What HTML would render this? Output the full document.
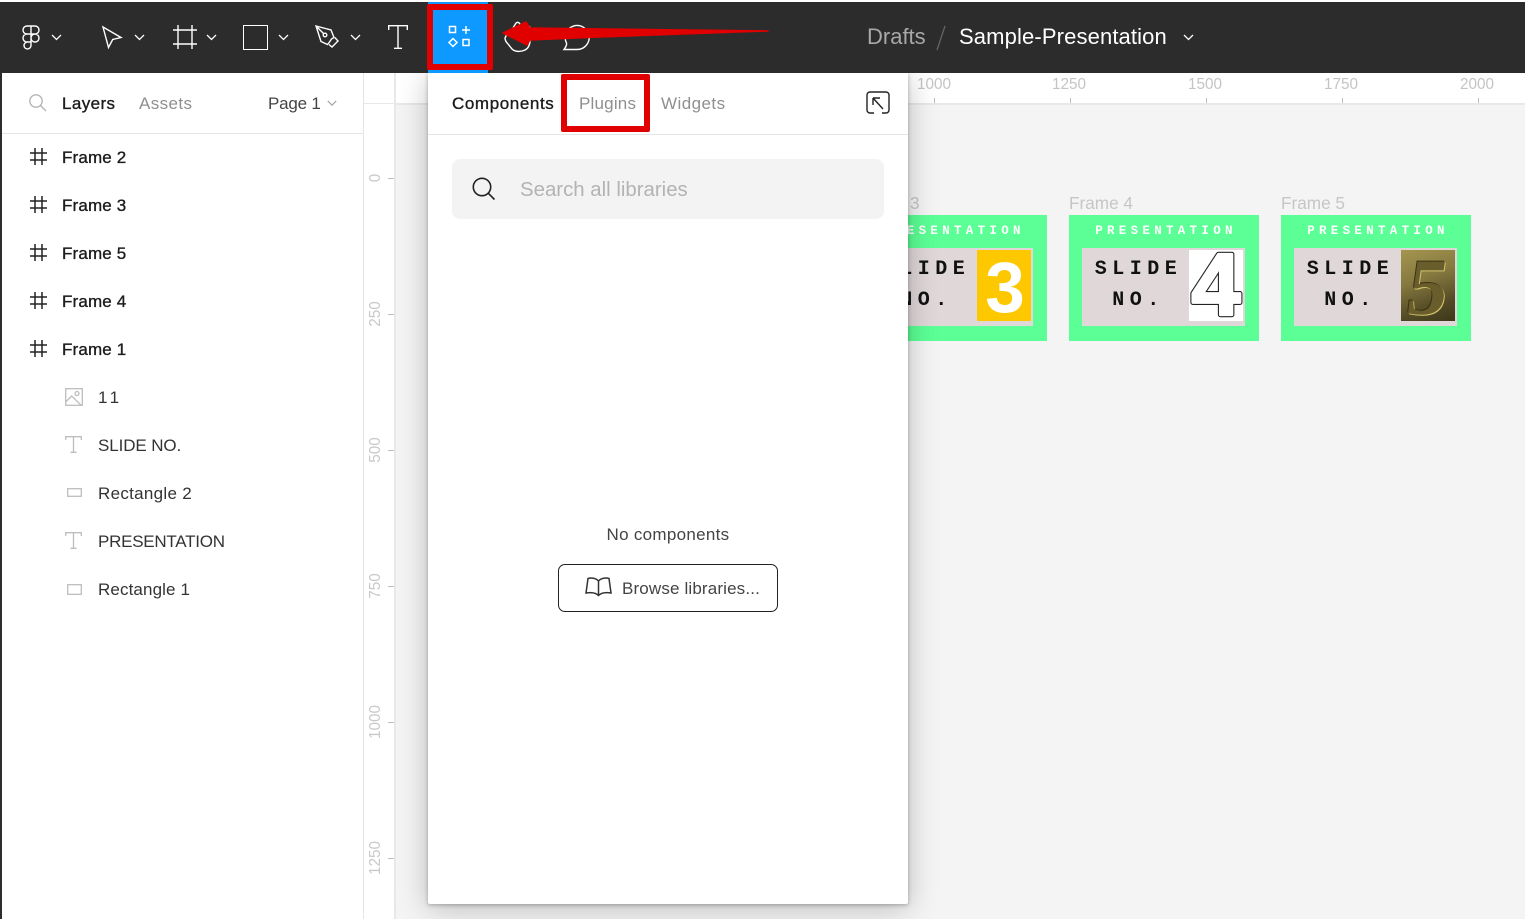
<!DOCTYPE html>
<html><head><meta charset="utf-8"><title>Sample-Presentation</title>
<style>
html,body{margin:0;padding:0;background:#fff}
body{width:1525px;height:919px;overflow:hidden;position:relative;font-family:"Liberation Sans",sans-serif;color:#222}
.a{position:absolute;white-space:nowrap}
svg{position:absolute;overflow:visible}
.t{font-size:17px;line-height:20px;margin-top:1px}
.b{font-weight:400;color:#1c1c1c;-webkit-text-stroke:.35px #1c1c1c}
.f{letter-spacing:.15px}
.rh{position:absolute;top:76px;font-size:15.300px;line-height:18px;color:#c4c4c4;width:60px;text-align:center}
.tk{position:absolute;background:#bdbdbd}
.rv{position:absolute;left:346px;width:60px;text-align:center;font-size:15.300px;line-height:18px;color:#c9c9c9;transform:rotate(-90deg)}
.fl{position:absolute;font-size:17.200px;line-height:18px;color:#c6c6c6;top:194px}
.fr{position:absolute;top:215px;width:190px;height:126px;background:#5cff95}
.fr .p{position:absolute;left:0;width:190px;top:8px;text-align:center;color:#fff;font:bold 12.500px/16px "Liberation Mono",monospace;letter-spacing:4.300px;text-indent:4px}
.fr .in{position:absolute;left:13px;top:33px;width:163px;height:78px;background:#dfd7d8}
.fr .s{position:absolute;left:0;width:108px;text-align:center;font:bold 20px/24px "Liberation Mono",monospace;letter-spacing:5.500px;color:#111;text-indent:5px}
.fr .im{position:absolute;left:107px;top:2px;width:54px;height:71px;overflow:hidden}
</style></head><body>

<!-- canvas -->
<div class="a" style="left:395px;top:104px;width:1130px;height:815px;background:#f4f4f4"></div>

<!-- frame labels -->
<div class="fl" style="left:910px">3</div>
<div class="fl" style="left:1069px">Frame 4</div>
<div class="fl" style="left:1281px">Frame 5</div>

<!-- frames -->
<div class="fr" style="left:857px">
 <div class="p">PRESENTATION</div>
 <div class="in">
  <div class="s" style="top:10px">SLIDE</div><div class="s" style="top:41px">NO.</div>
  <div class="im" style="background:#fdc800;border-radius:1px"><div style="position:absolute;left:1px;width:54px;text-align:center;top:-1px;font:bold 71px/80px 'Liberation Sans',sans-serif;color:#fff">3</div></div>
 </div>
</div>
<div class="fr" style="left:1069px">
 <div class="p">PRESENTATION</div>
 <div class="in">
  <div class="s" style="top:10px">SLIDE</div><div class="s" style="top:41px">NO.</div>
  <div class="im" style="background:#fff">
   <svg width="54" height="71" viewBox="0 0 54 71" style="left:0;top:0">
    <text x="27" y="65" text-anchor="middle" font-family="Liberation Sans" font-size="88" font-weight="700" fill="#fff" stroke="#222" stroke-width="5" stroke-linejoin="round">4</text>
    <text x="27" y="65" text-anchor="middle" font-family="Liberation Sans" font-size="88" font-weight="700" fill="#fff" stroke="#fff" stroke-width="2.800" stroke-linejoin="round">4</text>
   </svg>
  </div>
 </div>
</div>
<div class="fr" style="left:1281px">
 <div class="p">PRESENTATION</div>
 <div class="in">
  <div class="s" style="top:10px">SLIDE</div><div class="s" style="top:41px">NO.</div>
  <div class="im" style="background:linear-gradient(160deg,#a5954f 0%,#85793f 40%,#544b26 75%,#3d3719 100%)">
   <div style="position:absolute;left:0;width:54px;text-align:center;top:-2px;font:bold 80px/80px 'Liberation Serif',serif;transform:skewX(-8deg);color:#6a5d2c;text-shadow:1px 1px 0 #d3c26c,-1px -1px 0 #3a3216">5</div>
  </div>
 </div>
</div>

<!-- rulers -->
<div class="a" style="left:364px;top:73px;width:1161px;height:30px;background:#fff"></div>
<div class="a" style="left:364px;top:103px;width:1161px;height:2px;background:#e8e8e8"></div>
<div class="a" style="left:364px;top:104px;width:31px;height:815px;background:#fff"></div>
<div class="a" style="left:394px;top:73px;width:2px;height:846px;background:#e8e8e8"></div>

<div class="rh" style="left:904px">1000</div><div class="tk" style="left:934px;top:98px;width:1px;height:5px"></div>
<div class="rh" style="left:1039px">1250</div><div class="tk" style="left:1070px;top:98px;width:1px;height:5px"></div>
<div class="rh" style="left:1175px">1500</div><div class="tk" style="left:1206px;top:98px;width:1px;height:5px"></div>
<div class="rh" style="left:1311px">1750</div><div class="tk" style="left:1342px;top:98px;width:1px;height:5px"></div>
<div class="rh" style="left:1447px">2000</div><div class="tk" style="left:1478px;top:98px;width:1px;height:5px"></div>

<div class="rv" style="top:169px">0</div><div class="tk" style="left:388px;top:178px;width:6px;height:1px"></div>
<div class="rv" style="top:305px">250</div><div class="tk" style="left:388px;top:314px;width:6px;height:1px"></div>
<div class="rv" style="top:441px">500</div><div class="tk" style="left:388px;top:450px;width:6px;height:1px"></div>
<div class="rv" style="top:577px">750</div><div class="tk" style="left:388px;top:586px;width:6px;height:1px"></div>
<div class="rv" style="top:713px">1000</div><div class="tk" style="left:388px;top:722px;width:6px;height:1px"></div>
<div class="rv" style="top:849px">1250</div><div class="tk" style="left:388px;top:858px;width:6px;height:1px"></div>

<!-- left panel -->
<div class="a" style="left:0;top:73px;width:2px;height:846px;background:#2c2c2c"></div>
<div class="a" style="left:2px;top:73px;width:361px;height:846px;background:#fff"></div>
<div class="a" style="left:363px;top:73px;width:1px;height:846px;background:#e5e5e5"></div>
<div class="a" style="left:2px;top:133px;width:361px;height:1px;background:#e5e5e5"></div>

<svg style="left:28px;top:93px" width="20" height="20" viewBox="0 0 20 20" fill="none" stroke="#b5b5b5" stroke-width="1.400"><circle cx="8" cy="8" r="6.200"/><path d="M12.500 12.500L18 18"/></svg>
<div class="a t b" style="left:62px;top:93px;letter-spacing:.4px">Layers</div>
<div class="a t" style="left:139px;top:93px;color:#8f8f8f;letter-spacing:.4px">Assets</div>
<div class="a t" style="left:268px;top:93px;color:#444;letter-spacing:-.2px">Page 1</div>
<svg style="left:327px;top:100px" width="10" height="7" viewBox="0 0 10 7" fill="none" stroke="#a0a0a0" stroke-width="1.200"><path d="M.8 1L5 5.200 9.200 1"/></svg>

<!-- layer rows -->
<svg style="left:30px;top:148px" width="17" height="17" viewBox="0 0 17 17" stroke="#222" stroke-width="1.500" fill="none"><path d="M5 0v17M12 0v17M0 5h17M0 12h17"/></svg>
<div class="a t b f" style="left:62px;top:147px">Frame 2</div>
<svg style="left:30px;top:196px" width="17" height="17" viewBox="0 0 17 17" stroke="#222" stroke-width="1.500" fill="none"><path d="M5 0v17M12 0v17M0 5h17M0 12h17"/></svg>
<div class="a t b f" style="left:62px;top:195px">Frame 3</div>
<svg style="left:30px;top:244px" width="17" height="17" viewBox="0 0 17 17" stroke="#222" stroke-width="1.500" fill="none"><path d="M5 0v17M12 0v17M0 5h17M0 12h17"/></svg>
<div class="a t b f" style="left:62px;top:243px">Frame 5</div>
<svg style="left:30px;top:292px" width="17" height="17" viewBox="0 0 17 17" stroke="#222" stroke-width="1.500" fill="none"><path d="M5 0v17M12 0v17M0 5h17M0 12h17"/></svg>
<div class="a t b f" style="left:62px;top:291px">Frame 4</div>
<svg style="left:30px;top:340px" width="17" height="17" viewBox="0 0 17 17" stroke="#222" stroke-width="1.500" fill="none"><path d="M5 0v17M12 0v17M0 5h17M0 12h17"/></svg>
<div class="a t b f" style="left:62px;top:339px">Frame 1</div>

<svg style="left:65px;top:388px" width="18" height="18" viewBox="0 0 18 18" fill="none" stroke="#bdbdbd" stroke-width="1.300"><rect x=".7" y=".7" width="16.600" height="16.600"/><path d="M.7 14l6-6 9.500 9.300"/><circle cx="12" cy="5.500" r="2"/></svg>
<div class="a t" style="left:98px;top:387px;color:#333;letter-spacing:-1.300px">1 1</div>
<svg style="left:65px;top:436px" width="17" height="17" viewBox="0 0 17 17" fill="none" stroke="#bdbdbd" stroke-width="1.300"><path d="M.7 4V.7h15.600V4M8.500.7v15.600M5.500 16.300h6"/></svg>
<div class="a t" style="left:98px;top:435px;color:#333;letter-spacing:-.1px">SLIDE NO.</div>
<svg style="left:67px;top:488px" width="15" height="9" viewBox="0 0 15 9" fill="none" stroke="#bdbdbd" stroke-width="1.300"><rect x=".7" y=".7" width="13.600" height="7.600"/></svg>
<div class="a t" style="left:98px;top:483px;color:#333;letter-spacing:.3px">Rectangle 2</div>
<svg style="left:65px;top:532px" width="17" height="17" viewBox="0 0 17 17" fill="none" stroke="#bdbdbd" stroke-width="1.300"><path d="M.7 4V.7h15.600V4M8.500.7v15.600M5.500 16.300h6"/></svg>
<div class="a t" style="left:98px;top:531px;color:#333;letter-spacing:-.25px">PRESENTATION</div>
<svg style="left:67px;top:584px" width="15" height="11" viewBox="0 0 15 11" fill="none" stroke="#bdbdbd" stroke-width="1.300"><rect x=".7" y=".7" width="13.600" height="9.600"/></svg>
<div class="a t" style="left:98px;top:579px;color:#333;letter-spacing:.12px">Rectangle 1</div>

<!-- assets panel -->
<div class="a" style="left:428px;top:73px;width:480px;height:831px;background:#fff;border-radius:0 0 2px 2px;box-shadow:0 1px 4px rgba(0,0,0,.28),0 4px 30px rgba(0,0,0,.24)"></div>
<div class="a" style="left:428px;top:134px;width:480px;height:1px;background:#e5e5e5"></div>
<div class="a t b" style="left:452px;top:93px;letter-spacing:.6px">Components</div>
<div class="a t" style="left:579px;top:93px;color:#8f8f8f;letter-spacing:.2px">Plugins</div>
<div class="a t" style="left:661px;top:93px;color:#8f8f8f;letter-spacing:.45px">Widgets</div>
<svg style="left:866px;top:91px" width="24" height="25" viewBox="0 0 24 25" fill="none" stroke="#222" stroke-width="1.400"><path d="M4 1h16a3 3 0 0 1 3 3v15a3 3 0 0 1-3 3h-4M8 22H4a3 3 0 0 1-3-3V4a3 3 0 0 1 3-3"/><path d="M7 7v7M7 7h7M7 7l10 11"/></svg>

<div class="a" style="left:452px;top:159px;width:432px;height:60px;background:#f3f3f3;border-radius:8px"></div>
<svg style="left:472px;top:177px" width="24" height="24" viewBox="0 0 24 24" fill="none" stroke="#222" stroke-width="1.600"><circle cx="10" cy="10" r="8.700"/><path d="M16.200 16.200L22.500 22.500"/></svg>
<div class="a" style="left:520px;top:178px;font-size:20.400px;line-height:24px;color:#b3b3b3">Search all libraries</div>
<div class="a" style="left:428px;width:480px;text-align:center;top:525px;font-size:17px;line-height:20px;color:#444;letter-spacing:.3px">No components</div>
<div class="a" style="left:558px;top:564px;width:218px;height:46px;border:1px solid #222;border-radius:7px;background:#fff"></div>
<svg style="left:585px;top:577px" width="27" height="20" viewBox="0 0 27 20" fill="none" stroke="#333" stroke-width="1.500"><path d="M13.500 4C11 1 6 .5 3 1.500L1 16c6-1 10 0 12.500 2.500C16 16 20 15 26 16L24 1.500C21 .5 16 1 13.500 4zM13.500 4v14.500"/></svg>
<div class="a" style="left:622px;top:579px;font-size:17px;line-height:20px;color:#444;letter-spacing:.15px">Browse libraries...</div>

<!-- toolbar -->
<div class="a" style="left:0;top:2px;width:1525px;height:71px;background:#2c2c2c"></div>
<svg style="left:22px;top:25px" width="18" height="24" viewBox="0 0 18 24" fill="none" stroke="#fff" stroke-width="1.400"><path d="M9 1H5a4 4 0 0 0 0 8h4zM9 1h4a4 4 0 0 1 0 8H9zM9 9H5a4 4 0 0 0 0 8h4zM9 17H5a3.500 3.500 0 1 0 4 3.500zM17 13a4 4 0 1 1-8 0 4 4 0 0 1 8 0z"/></svg>
<svg style="left:51px;top:34px" width="11" height="7" viewBox="0 0 11 7" fill="none" stroke="#fff" stroke-width="1.300"><path d="M1 1l4.500 4.500L10 1"/></svg>
<svg style="left:102px;top:26px" width="20" height="23" viewBox="0 0 20 23" fill="none" stroke="#fff" stroke-width="1.400"><path d="M1 1l18 10.500-8.300 2L6.500 21.500z"/></svg>
<svg style="left:134px;top:34px" width="11" height="7" viewBox="0 0 11 7" fill="none" stroke="#fff" stroke-width="1.300"><path d="M1 1l4.500 4.500L10 1"/></svg>
<svg style="left:173px;top:25px" width="24" height="24" viewBox="0 0 24 24" fill="none" stroke="#fff" stroke-width="1.400"><path d="M5 0v24M19 0v24M0 5h24M0 19h24"/></svg>
<svg style="left:206px;top:34px" width="11" height="7" viewBox="0 0 11 7" fill="none" stroke="#fff" stroke-width="1.300"><path d="M1 1l4.500 4.500L10 1"/></svg>
<div class="a" style="left:243px;top:25px;width:23px;height:23px;border:1.500px solid #fff"></div>
<svg style="left:278px;top:34px" width="11" height="7" viewBox="0 0 11 7" fill="none" stroke="#fff" stroke-width="1.300"><path d="M1 1l4.500 4.500L10 1"/></svg>
<svg style="left:315px;top:25px" width="25" height="24" viewBox="0 0 25 24" fill="none" stroke="#fff" stroke-width="1.400"><path d="M1 1l15 4 3 7.500-2.500 1.500-2 3-2 2.500L6 16.500z"/><path d="M1 1l7.500 7.500"/><circle cx="10" cy="10" r="1.800"/><path d="M14 19.500l3 2.500 6-6-3.200-3.500"/></svg>
<svg style="left:350px;top:34px" width="11" height="7" viewBox="0 0 11 7" fill="none" stroke="#fff" stroke-width="1.300"><path d="M1 1l4.500 4.500L10 1"/></svg>
<svg style="left:388px;top:25px" width="20" height="24" viewBox="0 0 20 24" fill="none" stroke="#fff" stroke-width="1.400"><path d="M.7 5V.7h18.600V5M10 .7v22.600M6 23.300h8"/></svg>

<div class="a" style="left:428px;top:2px;width:60px;height:71px;background:#0d99ff"></div>
<svg style="left:448px;top:25px" width="24" height="24" viewBox="0 0 24 24" fill="none" stroke="#fff" stroke-width="1.500"><rect x="1.500" y="1.500" width="6" height="6"/><path d="M18 1v8M14 5h8"/><path d="M5 13.500l4 4-4 4-4-4z"/><rect x="15" y="14.500" width="6" height="6"/></svg>

<svg style="left:504px;top:21px" width="28" height="32" viewBox="0 0 28 32" fill="none" stroke="#fff" stroke-width="1.400"><path d="M12 2c2-1.500 4 0 4 2v4M3 13L1 17c0 2 1 4 3 6l4 5c3 3 9 3 13 1 4-2 5-6 5-10V7c0-2-3-2-3.500 0M12 2l-3 5"/></svg>
<svg style="left:563px;top:24px" width="29" height="27" viewBox="0 0 29 27" fill="none" stroke="#fff" stroke-width="1.400"><path d="M1 25.500h13a12 12 0 1 0-10.500-6.500c.5 2-1 4.500-2.500 6.500z"/></svg>

<!-- breadcrumb -->
<div class="a" style="left:867px;top:23px;font-size:22px;line-height:27px;color:#a8a8a8">Drafts</div>
<svg style="left:935px;top:25px" width="12" height="26" viewBox="0 0 12 26" fill="none" stroke="#666" stroke-width="1.200"><path d="M10 1L2 25"/></svg>
<div class="a" style="left:959px;top:23px;font-size:22px;line-height:27px;color:#fff;letter-spacing:.13px">Sample-Presentation</div>
<svg style="left:1183px;top:34px" width="11" height="7" viewBox="0 0 11 7" fill="none" stroke="#fff" stroke-width="1.300"><path d="M1 1l4.500 4.500L10 1"/></svg>

<!-- annotations -->
<div class="a" style="left:427px;top:4px;width:54px;height:54px;border:6px solid #e00000;border-radius:2px"></div>
<div class="a" style="left:561px;top:74px;width:77px;height:46px;border:6px solid #e00000;border-radius:2px"></div>
<svg style="left:0;top:0" width="1525" height="919" viewBox="0 0 1525 919"><path d="M768 31L530 28 526 22 503 33 527 45 530 40 600 37z" fill="#e00000" stroke="#e00000" stroke-linejoin="round" stroke-width="1.500"/></svg>
</body></html>
